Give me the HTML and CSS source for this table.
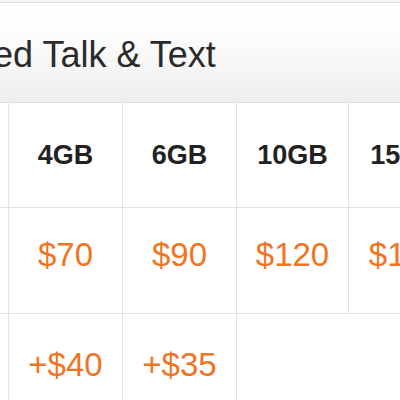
FILE: index.html
```html
<!DOCTYPE html>
<html>
<head>
<meta charset="utf-8">
<link rel="stylesheet" href="styles.css">
</head>
<body>
<div class="card">
  <div class="title"><h1>Unlimited Talk &amp; Text</h1></div>
  <div class="row row-head">
    <div class="label"></div>
    <div class="cell">4GB</div>
    <div class="cell">6GB</div>
    <div class="cell">10GB</div>
    <div class="cell">15GB</div>
  </div>
  <div class="row row-price">
    <div class="label"></div>
    <div class="cell">$70</div>
    <div class="cell">$90</div>
    <div class="cell">$120</div>
    <div class="cell">$150</div>
  </div>
  <div class="row row-extra">
    <div class="label"></div>
    <div class="cell">+$40</div>
    <div class="cell">+$35</div>
    <div class="cell cell-wide"></div>
  </div>
</div>
</body>
</html>
```

FILE: styles.css
```css
html, body {
  margin: 0;
  padding: 0;
  background: #ffffff;
  overflow: hidden;
  width: 400px;
  height: 400px;
}
body {
  font-family: "Liberation Sans", Arial, sans-serif;
  background: #f6f6f6;
  padding-top: 2px;
  box-sizing: border-box;
}
.card {
  background: #fff;
  border-top: 1px solid #dcdcdc;
  width: 520px;
}
.title {
  height: 99px;
  border-bottom: 1px solid #dedede;
  background: linear-gradient(to bottom, #ffffff 0%, #fbfbfb 40%, #eeeeee 100%);
  display: flex;
  align-items: center;
  overflow: hidden;
}
.title h1 {
  margin: 0 0 0 -117px;
  font-weight: normal;
  font-size: 36px;
  color: #2a2a2a;
  white-space: nowrap;
  padding-top: 4px;
}
.row {
  display: grid;
  grid-template-columns: 8px 114px 114px 112px 114px;
  border-bottom: 1px solid #e2e2e2;
}
.cell {
  border-left: 1px solid #e2e2e2;
  display: flex;
  align-items: center;
  justify-content: center;
  white-space: nowrap;
}
.row-head { height: 104px; }
.row-head .cell {
  font-weight: bold;
  font-size: 27px;
  color: #222;
}
.row-price { height: 105px; }
.row-price .cell {
  font-size: 33px;
  color: #f07421;
  padding-bottom: 12px;
}
.row-extra {
  height: 105px;
  border-bottom: none;
}
.row-extra .cell {
  font-size: 33px;
  color: #f07421;
  padding-bottom: 4px;
}
.row-extra .cell-wide {
  grid-column: 4 / span 2;
}
```
